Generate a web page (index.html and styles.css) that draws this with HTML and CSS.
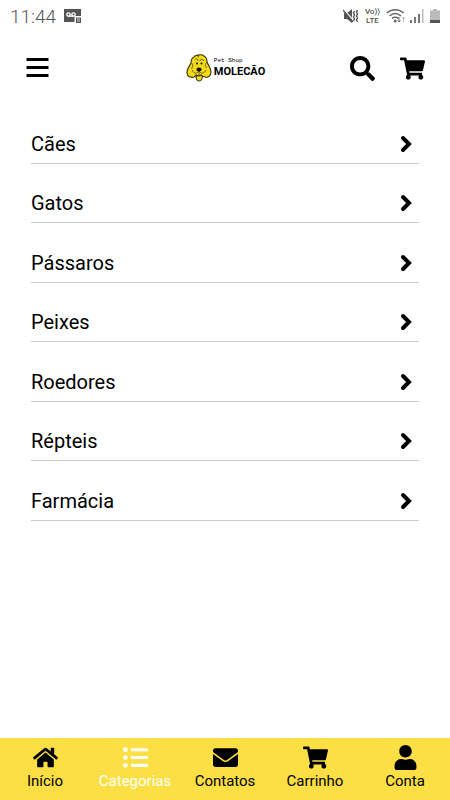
FILE: index.html
```html
<!DOCTYPE html>
<html lang="pt-BR">
<head>
<meta charset="utf-8">
<meta name="viewport" content="width=device-width, initial-scale=1">
<title>Pet Shop Molecão</title>
<link rel="stylesheet" href="styles.css">
</head>
<body>
<svg class="defs" aria-hidden="true">
  <symbol id="cart" viewBox="0 0 576 512"><path d="M528.12 301.319l47.273-208C578.806 78.301 567.391 64 551.99 64H159.208l-9.166-44.81C147.758 8.021 137.93 0 126.529 0H24C10.745 0 0 10.745 0 24v16c0 13.255 10.745 24 24 24h69.883l70.248 343.435C147.325 417.1 136 435.222 136 456c0 30.928 25.072 56 56 56s56-25.072 56-56c0-15.674-6.447-29.835-16.824-40h209.647C430.447 426.165 424 440.326 424 456c0 30.928 25.072 56 56 56s56-25.072 56-56c0-22.172-12.888-41.332-31.579-50.405l5.517-24.276c3.413-15.018-8.002-29.319-23.403-29.319H218.117l-6.545-32h293.145c11.206 0 20.92-7.754 23.403-18.681z"/></symbol>
  <symbol id="chevron" viewBox="0 0 12 18"><path d="M3 3L9 9l-6 6" fill="none" stroke="#000" stroke-width="4" stroke-linecap="round"/></symbol>
</svg>

<div class="status">
  <span class="clock">11:44</span>
  <svg class="voicemail" viewBox="0 0 18 16" aria-hidden="true">
    <path d="M0 1h17v13H0z" fill="#555"/>
    <g fill="none" stroke="#fff" stroke-width="1.300"><circle cx="4.500" cy="6.500" r="1.700"/><circle cx="9.500" cy="6.500" r="1.700"/><path d="M4.500 8.200h5"/></g>
    <path d="M10.500 8h7v7.500h-7z" fill="#fff"/><path d="M12 9.500h5V15h-5z" fill="#555"/><path d="M13 11h3M13 13h3" stroke="#fff" stroke-width=".8"/>
  </svg>
  <svg class="mute" viewBox="0 0 16 16" aria-hidden="true">
    <path d="M1 5h3l5-4v14l-5-4H1z" fill="#555"/><path d="M0 1l11 12" stroke="#fff" stroke-width="1.500"/><path d="M0 2l10 12" stroke="#555" stroke-width="1.300"/>
    <path d="M11.500 3l-1 2 1 2-1 2 1 2-1 2M14.500 2l-1 2 1 2-1 2 1 2-1 2 1 2" fill="none" stroke="#555" stroke-width="1.400"/>
  </svg>
  <span class="volte"><span>Vo))</span><span>LTE</span></span>
  <svg class="wifi" viewBox="0 0 20 16" aria-hidden="true">
    <g fill="none" stroke="#666" stroke-width="1.500"><path d="M1 5c4.500-4.500 12-4.500 16.500 0M3.500 8c3.500-3 8-3 11.500 0M6 10.500c2-1.600 4.500-1.600 6.500 0"/></g><circle cx="9.200" cy="13" r="1.500" fill="#666"/>
    <path d="M13 9v5M11.500 12.500L13 14l1.500-1.500" fill="none" stroke="#666"/><path d="M17.500 14V9M16 10.500L17.500 9l1.500 1.500" fill="none" stroke="#bbb"/>
  </svg>
  <svg class="signal" viewBox="0 0 14 16" aria-hidden="true"><path d="M0 12h2v3H0zM4 9h2v6H4zM8 6h2v9H8z" fill="#777"/><path d="M12 1h1.500v14H12z" fill="#bbb"/></svg>
  <svg class="battery" viewBox="0 0 10 16" aria-hidden="true"><path d="M3 1h4v1.500h3V15H0V2.500h3z" fill="#bbb"/><path d="M0 12h10v3H0z" fill="#555"/></svg>
</div>

<header class="header">
  <button class="icon-button" type="button" aria-label="Menu"><svg class="menu-icon" viewBox="0 0 22 20"><path d="M0 0h22v3H0zM0 8h22v3H0zM0 16h22v3H0z"/></svg></button>
  <a class="logo" href="#" aria-label="Pet Shop Molecão">
    <svg class="dog" viewBox="0 0 26 28" aria-hidden="true">
      <g fill="#f1da1c" stroke="#37320b" stroke-width="1.100" stroke-linejoin="round">
        <path d="M10.500 21c-1 3 0 6 2.500 6s4-3 3-6z"/>
        <path d="M8 3c1-2 3-1 4-2 2 0 4-1 6 1 2 1 3 3 3 6 1 3 4 6 4 10 0 4-3 6-6 5-2 0-3-1-4-2-2 1-4 1-5 0-1 2-3 3-5 2-3 0-4-2-4-5 0-4 3-6 4-9 0-3 1-5 3-6z"/>
      </g>
      <path d="M5.500 9c2 1 1 4 0 6M20.500 9c-2 1-1 3 0 5M6 16c2 4 5 4 7 1 2 3 5 3 7-1M13 18v3M9 6c1-2 3-1 3 1M14 7c0-2 3-2 4 0M12 1c-1 1 0 2 1 2" fill="none" stroke="#37320b" stroke-width=".7"/>
      <ellipse cx="13" cy="15.500" rx="2.600" ry="2" fill="#111"/><circle cx="11" cy="9.500" r=".9"/><circle cx="15.500" cy="9.500" r=".9"/>
    </svg>
    <span class="logo-text"><span class="logo-small">Pet Shop</span><span class="logo-name">MOLECÃO</span></span>
  </a>
  <div class="actions">
    <button class="icon-button" type="button" aria-label="Buscar"><svg class="search-icon" viewBox="0 0 512 512"><path d="M505 442.700L405.300 343c-4.500-4.500-10.600-7-17-7H372c27.600-35.300 44-79.700 44-128C416 93.100 322.900 0 208 0S0 93.100 0 208s93.100 208 208 208c48.300 0 92.700-16.400 128-44v16.300c0 6.400 2.500 12.500 7 17l99.700 99.700c9.400 9.400 24.600 9.400 33.900 0l28.300-28.300c9.400-9.400 9.400-24.600.1-34zM208 336c-70.700 0-128-57.200-128-128 0-70.700 57.200-128 128-128 70.700 0 128 57.200 128 128 0 70.700-57.200 128-128 128z"/></svg></button>
    <button class="icon-button" type="button" aria-label="Carrinho"><svg class="cart-icon"><use href="#cart"/></svg></button>
  </div>
</header>

<main>
  <ul class="categories">
    <li><a href="#">Cães<svg class="chevron"><use href="#chevron"/></svg></a></li>
    <li><a href="#">Gatos<svg class="chevron"><use href="#chevron"/></svg></a></li>
    <li><a href="#">Pássaros<svg class="chevron"><use href="#chevron"/></svg></a></li>
    <li><a href="#">Peixes<svg class="chevron"><use href="#chevron"/></svg></a></li>
    <li><a href="#">Roedores<svg class="chevron"><use href="#chevron"/></svg></a></li>
    <li><a href="#">Répteis<svg class="chevron"><use href="#chevron"/></svg></a></li>
    <li><a href="#">Farmácia<svg class="chevron"><use href="#chevron"/></svg></a></li>
  </ul>
</main>

<nav class="tabs">
  <a href="#"><svg viewBox="0 0 576 512"><path d="M280.370 148.260L96 300.110V464a16 16 0 0 0 16 16l112.060-.29a16 16 0 0 0 15.920-16V368a16 16 0 0 1 16-16h64a16 16 0 0 1 16 16v95.640a16 16 0 0 0 16 16.050L464 480a16 16 0 0 0 16-16V300L295.670 148.260a12.190 12.190 0 0 0-15.300 0zM571.600 251.470L488 182.560V44.050a12 12 0 0 0-12-12h-56a12 12 0 0 0-12 12v72.610L318.470 43a48 48 0 0 0-61 0L4.340 251.470a12 12 0 0 0-1.600 16.900l25.500 31A12 12 0 0 0 45.150 301l235.220-193.740a12.190 12.190 0 0 1 15.300 0L530.900 301a12 12 0 0 0 16.900-1.600l25.500-31a12 12 0 0 0-1.700-16.930z"/></svg>Início</a>
  <a href="#" class="active" aria-current="page"><svg viewBox="0 0 512 512"><path d="M48 48a48 48 0 1 0 48 48 48 48 0 0 0-48-48zm0 160a48 48 0 1 0 48 48 48 48 0 0 0-48-48zm0 160a48 48 0 1 0 48 48 48 48 0 0 0-48-48zm448 16H176a16 16 0 0 0-16 16v32a16 16 0 0 0 16 16h320a16 16 0 0 0 16-16v-32a16 16 0 0 0-16-16zm0-320H176a16 16 0 0 0-16 16v32a16 16 0 0 0 16 16h320a16 16 0 0 0 16-16V80a16 16 0 0 0-16-16zm0 160H176a16 16 0 0 0-16 16v32a16 16 0 0 0 16 16h320a16 16 0 0 0 16-16v-32a16 16 0 0 0-16-16z"/></svg>Categorias</a>
  <a href="#"><svg viewBox="0 0 512 512"><path d="M502.300 190.800c3.900-3.100 9.700-.2 9.700 4.700V400c0 26.500-21.500 48-48 48H48c-26.500 0-48-21.500-48-48V195.600c0-5 5.700-7.800 9.700-4.700 22.400 17.400 52.100 39.500 154.100 113.600 21.100 15.400 56.700 47.800 92.200 47.600 35.700.3 72-32.800 92.300-47.600 102-74.100 131.600-96.300 154-113.700zM256 320c23.200.4 56.600-29.200 73.400-41.400 132.700-96.300 142.800-104.700 173.400-128.700 5.800-4.500 9.200-11.500 9.200-18.900v-19c0-26.500-21.500-48-48-48H48c-26.500 0-48 21.500-48 48v19c0 7.400 3.400 14.300 9.200 18.900 30.600 23.900 40.700 32.400 173.400 128.700 16.800 12.200 50.200 41.800 73.400 41.400z"/></svg>Contatos</a>
  <a href="#"><svg><use href="#cart"/></svg>Carrinho</a>
  <a href="#"><svg viewBox="0 0 448 512"><path d="M224 256c70.700 0 128-57.300 128-128S294.700 0 224 0 96 57.300 96 128s57.300 128 128 128zm89.600 32h-16.700c-22.200 10.200-46.900 16-72.900 16s-50.600-5.800-72.900-16h-16.700C60.200 288 0 348.200 0 422.400V464c0 26.500 21.500 48 48 48h352c26.500 0 48-21.500 48-48v-41.600c0-74.200-60.200-134.400-134.400-134.400z"/></svg>Conta</a>
</nav>
</body>
</html>
```
FILE: styles.css
```css
* { box-sizing: border-box; }

body {
  margin: 0;
  min-height: 100vh;
  display: flex;
  flex-direction: column;
  background: #fff;
  color: #000;
  font-family: Roboto, "Liberation Sans", sans-serif;
}

a { color: inherit; text-decoration: none; }

.defs { display: none; }

.status {
  display: flex;
  align-items: center;
  height: 32px;
  padding: 0 10px;
  color: #555;
}

.clock { font-size: 19px; font-weight: 300; }
.voicemail { width: 18px; height: 16px; margin-left: 8px; }
.mute { width: 16px; height: 16px; margin-left: auto; }

.volte {
  display: flex;
  flex-direction: column;
  margin: 0 6px;
  font-size: 8px;
  font-weight: 500;
  line-height: 9px;
  text-align: center;
}

.wifi { width: 20px; height: 16px; }
.signal { width: 14px; height: 16px; margin: 0 6px 0 4px; }
.battery { width: 10px; height: 16px; }

.header {
  display: grid;
  grid-template-columns: 1fr auto 1fr;
  align-items: center;
  height: 72px;
  padding: 0 25px 0 26px;
}

.icon-button {
  display: flex;
  padding: 0;
  border: 0;
  background: none;
}

.menu-icon { width: 23px; height: 20px; }
.search-icon { width: 25px; height: 25px; }
.cart-icon { width: 25px; height: 23px; }

.actions {
  display: flex;
  align-items: center;
  justify-content: flex-end;
  gap: 25px;
}

.logo { display: flex; align-items: center; gap: 2px; }
.dog { width: 26px; height: 28px; }
.logo-text { display: flex; flex-direction: column; }

.logo-small {
  font-family: "Liberation Mono", monospace;
  font-size: 6px;
  line-height: 8px;
}

.logo-name {
  font-size: 11px;
  font-weight: 700;
  line-height: 14px;
}

main { flex: 1; padding: 0 31px; }

.categories {
  display: grid;
  grid-auto-rows: 1fr;
  min-height: 417px;
  margin: 0;
  padding: 0;
  list-style: none;
}

.categories li { display: flex; border-bottom: 1px solid #ccc; }

.categories a {
  flex: 1;
  display: flex;
  align-items: flex-end;
  justify-content: space-between;
  padding: 0 7px 7px 0;
  font-size: 20px;
  line-height: 24px;
}

.chevron { width: 12px; height: 18px; margin-bottom: 3px; }

.tabs {
  display: grid;
  grid-template-columns: repeat(5, 1fr);
  height: 62px;
  padding-top: 7px;
  background: #fcdf45;
  font-size: 15px;
  line-height: 18px;
}

.tabs a {
  display: flex;
  flex-direction: column;
  align-items: center;
  gap: 2px;
}

.tabs svg { width: 25px; height: 25px; fill: currentColor; }
.tabs .active { color: #fff; }
```
